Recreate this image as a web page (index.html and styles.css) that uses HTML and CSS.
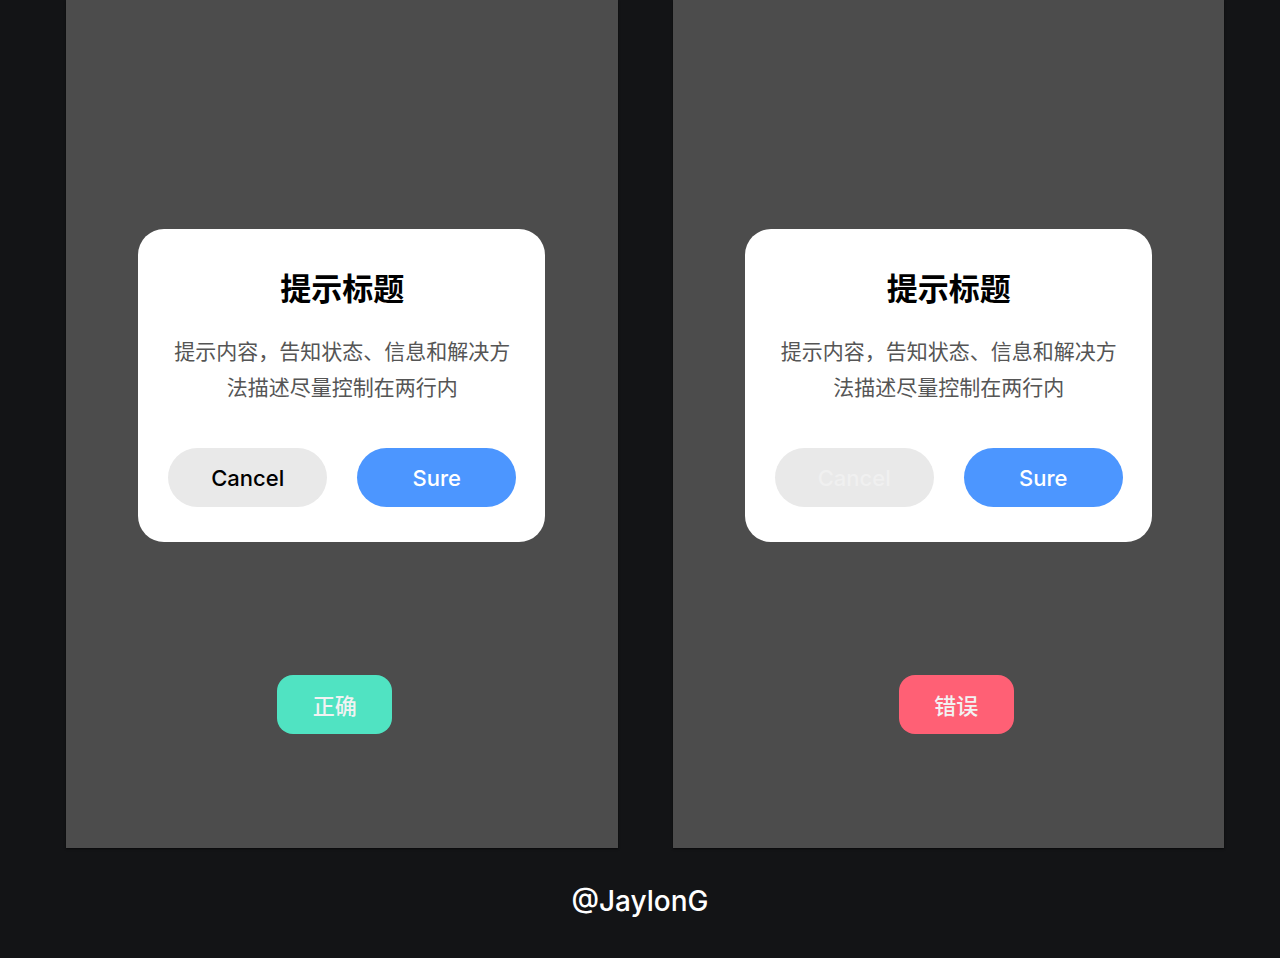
FILE: index.html
```html
<!DOCTYPE html>
<html lang="zh-CN">
<head>
    <meta charset="UTF-8">
    <meta name="viewport" content="width=device-width, initial-scale=1.0">
    <title>提示弹窗</title>
    <link rel="stylesheet" href="styles.css">
</head>
<body>
    <main class="screens">
        <section class="screen">
            <div class="dialog" role="dialog" aria-labelledby="title-right">
                <h2 id="title-right">提示标题</h2>
                <p>提示内容，告知状态、信息和解决方法描述尽量控制在两行内</p>
                <div class="actions">
                    <button type="button" class="btn btn-cancel">Cancel</button>
                    <button type="button" class="btn btn-sure">Sure</button>
                </div>
            </div>
            <div class="tag-row tag-row-right">
                <span class="tag tag-right">正确</span>
            </div>
        </section>

        <section class="screen">
            <div class="dialog" role="dialog" aria-labelledby="title-wrong">
                <h2 id="title-wrong">提示标题</h2>
                <p>提示内容，告知状态、信息和解决方法描述尽量控制在两行内</p>
                <div class="actions">
                    <button type="button" class="btn btn-cancel" disabled>Cancel</button>
                    <button type="button" class="btn btn-sure">Sure</button>
                </div>
            </div>
            <div class="tag-row tag-row-wrong">
                <span class="tag tag-wrong">错误</span>
            </div>
        </section>
    </main>

    <footer>@JaylonG</footer>
</body>
</html>
```
FILE: styles.css
```css
* {
    box-sizing: border-box;
}

body {
    margin: 0;
    min-height: 100vh;
    background: #131416;
    color: #fff;
    font-family: Inter, "Noto Sans CJK SC", sans-serif;
}

.screens {
    display: grid;
    grid-template-columns: 1fr 1fr;
    gap: 55px;
    padding: 0 56px 0 66px;
}

.screen {
    display: flex;
    flex-direction: column;
    align-items: center;
    padding: 229px 20px 114px;
    background: #4c4c4c;
    box-shadow: 0 1px 2px rgba(0, 0, 0, 0.6);
}

.dialog {
    width: 100%;
    max-width: 407px;
    padding: 36px 29px 35px 30px;
    background: #fff;
    border-radius: 26px;
    text-align: center;
}

.dialog h2 {
    margin: 0 0 23px;
    color: #000;
    font-family: "Noto Sans CJK SC", sans-serif;
    font-size: 31px;
    font-weight: 700;
    line-height: 44px;
}

.dialog p {
    margin: 0 0 44px;
    padding: 0 5px;
    color: #555;
    font-family: "Noto Sans CJK SC", sans-serif;
    font-size: 21px;
    font-weight: 400;
    line-height: 36px;
}

.actions {
    display: flex;
    gap: 30px;
}

.btn {
    flex: 1;
    height: 59px;
    padding: 0;
    border: none;
    border-radius: 30px;
    font-family: Inter, sans-serif;
    font-size: 22px;
    font-weight: 500;
    cursor: pointer;
}

.btn-cancel {
    background: #e9e9e9;
    color: #000;
}

.btn-cancel:disabled {
    color: #f0f0f0;
    cursor: not-allowed;
}

.btn-sure {
    background: #4c96ff;
    color: #fff;
}

.tag-row {
    margin-top: 133px;
}

.tag-row-right {
    padding-right: 14px;
}

.tag-row-wrong {
    padding-left: 16px;
}

.tag {
    display: block;
    width: 115px;
    border-radius: 16px;
    color: #f2f2f2;
    font-family: "Noto Sans CJK SC", sans-serif;
    font-size: 22px;
    font-weight: 500;
    line-height: 59px;
    text-align: center;
}

.tag-right {
    background: #50e3c2;
}

.tag-wrong {
    background: #ff6075;
}

footer {
    padding: 33px 0 37px;
    font-size: 28px;
    font-weight: 500;
    line-height: 40px;
    text-align: center;
}
```
